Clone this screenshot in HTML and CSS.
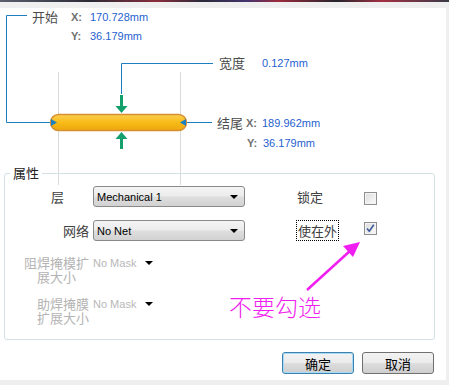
FILE: index.html
```html
<!DOCTYPE html>
<html lang="zh-CN">
<head>
    <meta charset="UTF-8">
    <title>线条属性</title>
    <link rel="stylesheet" href="styles.css">
</head>
<body>

    <div class="window">
        <div class="titlebar"></div>

        <div class="panel">
            <div class="diagram">
                <svg class="sketch" width="446" height="180" viewBox="0 0 446 180">
                    <defs>
                        <linearGradient id="track" x1="0" y1="0" x2="0" y2="1">
                            <stop offset="0" stop-color="#fdd052"/>
                            <stop offset="0.5" stop-color="#f8bb17"/>
                            <stop offset="1" stop-color="#efa60d"/>
                        </linearGradient>
                    </defs>
                    <!-- guide lines -->
                    <line x1="58.5" y1="64" x2="58.5" y2="177" stroke="#dadada"/>
                    <line x1="180.5" y1="64" x2="180.5" y2="177" stroke="#dadada"/>
                    <!-- leaders -->
                    <path d="M27 7.5 H6.5 V114.5 H51" fill="none" stroke="#1d7fc1"/>
                    <path d="M213 55.5 H121.5 V86" fill="none" stroke="#1d7fc1"/>
                    <path d="M186 114.5 H212" fill="none" stroke="#1d7fc1"/>
                    <!-- track -->
                    <rect x="50.5" y="106.5" width="136" height="16" rx="8" fill="url(#track)" stroke="#d68f33" stroke-width="1.5"/>
                    <path d="M51 111 L57 114.5 L51 118 Z" fill="#1d7fc1"/>
                    <path d="M186 111 L180 114.5 L186 118 Z" fill="#1d7fc1"/>
                    <!-- width arrows -->
                    <rect x="120" y="87" width="3" height="12" fill="#13a06c"/>
                    <path d="M115.5 98 H127.5 L121.5 105 Z" fill="#13a06c"/>
                    <path d="M115.5 131 H127.5 L121.5 124 Z" fill="#13a06c"/>
                    <rect x="120" y="130" width="3" height="11" fill="#13a06c"/>
                </svg>

                <div class="coords coords-start">
                    <span class="tag">开始</span><span class="axis">X:</span><span class="value">170.728mm</span>
                    <span></span><span class="axis">Y:</span><span class="value">36.179mm</span>
                </div>

                <div class="coords coords-width">
                    <span class="tag">宽度</span><span class="value">0.127mm</span>
                </div>

                <div class="coords coords-end">
                    <span class="tag">结尾</span><span class="axis">X:</span><span class="value">189.962mm</span>
                    <span></span><span class="axis axis-y">Y:</span><span class="value value-y">36.179mm</span>
                </div>
            </div>

            <fieldset class="props">
                <legend>属性</legend>

                <div class="props-grid">
                    <span class="label label-layer">层</span>
                    <div class="select">
                        <span>Mechanical 1</span>
                        <i class="caret"></i>
                    </div>
                    <span class="side-label">锁定</span>
                    <span class="check check-lock"></span>

                    <span class="label">网络</span>
                    <div class="select">
                        <span>No Net</span>
                        <i class="caret"></i>
                    </div>
                    <span class="side-label"><span class="focus">使在外</span></span>
                    <span class="check check-keepout">
                        <svg width="11" height="11" viewBox="0 0 11 11">
                            <path d="M2 5.5 L4.3 8.2 L8.8 1.8" fill="none" stroke="#3f5a9c" stroke-width="1.6"/>
                        </svg>
                    </span>

                    <span class="label label-off">阻焊掩模扩<br>展大小</span>
                    <div class="mask">
                        <span>No Mask</span>
                        <i class="caret"></i>
                    </div>

                    <span class="label label-off">助焊掩膜<br>扩展大小</span>
                    <div class="mask">
                        <span>No Mask</span>
                        <i class="caret"></i>
                    </div>
                </div>
            </fieldset>

            <div class="note">
                <svg class="note-arrow" width="70" height="60" viewBox="0 0 70 60">
                    <line x1="4" y1="58" x2="48" y2="18" stroke="#f01ef0" stroke-width="2.5"/>
                    <path d="M57 10 L40 14 L50 25 Z" fill="#f01ef0"/>
                </svg>
                <span class="note-text">不要勾选</span>
            </div>

            <div class="actions">
                <button class="btn btn-default">确定</button>
                <button class="btn">取消</button>
            </div>
        </div>
    </div>

</body>
</html>
```

FILE: styles.css
```css
* {
    box-sizing: border-box;
}

body {
    margin: 0;
    font-family: "Noto Sans CJK SC", "Liberation Sans", sans-serif;
    font-size: 13px;
    color: #333;
}

.window {
    width: 449px;
    height: 385px;
    background: #efefef;
    overflow: hidden;
}

.titlebar {
    height: 2px;
    margin-bottom: 6px;
    background: linear-gradient(90deg, #5b5f6e 0%, #2b2b36 20%, #8a2c3c 35%, #2a2a3a 45%, #45346e 55%, #9b2a3c 62%, #25252d 75%, #a23042 85%, #3a3a48 100%);
}

.panel {
    position: relative;
    width: 446px;
    height: 372px;
    background: #fff;
}

/* drawing at the top */

.diagram {
    position: relative;
    height: 157px;
}

.sketch {
    position: absolute;
    left: 0;
    top: 0;
    overflow: visible;
}

.coords {
    position: absolute;
    display: grid;
    line-height: 16px;
    align-items: center;
}

.coords-start {
    left: 32px;
    top: 1px;
    grid-template-columns: 39px 19px auto;
    row-gap: 3px;
}

.coords-width {
    left: 219px;
    top: 47px;
    grid-template-columns: 43px auto;
}

.coords-end {
    left: 217px;
    top: 107px;
    grid-template-columns: 29px 16px auto;
    row-gap: 4px;
}

.tag {
    color: #4a4a4a;
    font-size: 13px;
}

.axis {
    color: #707070;
    font-family: "Liberation Sans", sans-serif;
    font-size: 11px;
    font-weight: bold;
}

.axis-y,
.value-y {
    margin-left: 1px;
}

.value {
    color: #1f5fd0;
    font-family: "Liberation Sans", sans-serif;
    font-size: 11px;
}

/* properties group */

.props {
    position: relative;
    margin: 0 11px 0 4px;
    padding: 0;
    height: 175px;
    border: 1px solid #d5dfe6;
    border-radius: 3px;
}

.props legend {
    margin-left: 5px;
    padding: 0 3px;
    line-height: 16px;
    color: #222;
}

.props-grid {
    display: grid;
    grid-template-columns: 88px 152px 52px 67px 13px;
    grid-template-rows: 21px 21px 28px 28px;
    row-gap: 13px;
    padding-top: 5px;
    align-items: center;
}

.label {
    grid-column: 1;
    text-align: right;
    padding-right: 4px;
    color: #404040;
}

.label-layer {
    padding-right: 29px;
}

.label-off {
    align-self: start;
    justify-self: end;
    margin: 2px 4px 0 0;
    padding: 0;
    text-align: center;
    line-height: 14px;
    color: #b4b4b4;
}

.select {
    grid-column: 2;
    display: flex;
    align-items: center;
    justify-content: space-between;
    height: 21px;
    padding: 0 6px 0 3px;
    border: 1px solid #8a8a8a;
    border-radius: 3px;
    background: linear-gradient(#f4f4f4, #ececec 48%, #dedede 52%, #d2d2d2);
    font-family: "Liberation Sans", sans-serif;
    font-size: 11px;
    color: #000;
}

.caret {
    width: 0;
    height: 0;
    border-left: 4px solid transparent;
    border-right: 4px solid transparent;
    border-top: 4px solid #000;
}

.mask {
    grid-column: 2;
    display: flex;
    align-items: center;
    gap: 9px;
    align-self: start;
    margin-top: 3px;
    font-family: "Liberation Sans", sans-serif;
    font-size: 11px;
    color: #b8b8b8;
}

.side-label {
    grid-column: 4;
    color: #404040;
}

.focus {
    margin-left: -1px;
    padding: 0 1px;
    border: 1px dotted #000;
}

.check {
    grid-column: 5;
    display: flex;
    align-items: center;
    justify-content: center;
    width: 13px;
    height: 13px;
    border: 1px solid #8e8f8f;
    background: linear-gradient(135deg, #dcdcdc, #fbfbfb);
    box-shadow: inset 0 0 0 1px #f4f4f4;
}

.check-lock {
    margin-top: 3px;
}

.check-keepout {
    margin-top: -5px;
}

/* annotation drawn on the screenshot */

.note {
    position: absolute;
    left: 229px;
    top: 224px;
    width: 140px;
    height: 90px;
    pointer-events: none;
}

.note-arrow {
    position: absolute;
    left: 74px;
    top: 0;
}

.note-text {
    position: absolute;
    left: 0;
    top: 63px;
    font-size: 23px;
    line-height: 23px;
    font-weight: 300;
    color: #f01ef0;
    white-space: nowrap;
}

/* buttons */

.actions {
    display: flex;
    justify-content: flex-end;
    gap: 8px;
    margin-top: 12px;
    padding-right: 12px;
}

.btn {
    width: 72px;
    height: 22px;
    padding: 0;
    border: 1px solid #707070;
    border-radius: 3px;
    background: linear-gradient(#f2f2f2, #ebebeb 48%, #dddddd 52%, #cfcfcf);
    font-family: "Noto Sans CJK SC", sans-serif;
    font-size: 13px;
    color: #000;
}

.btn-default {
    border-color: #3c7fb1;
    box-shadow: inset 0 0 0 1px #a6dcf3;
}
```
